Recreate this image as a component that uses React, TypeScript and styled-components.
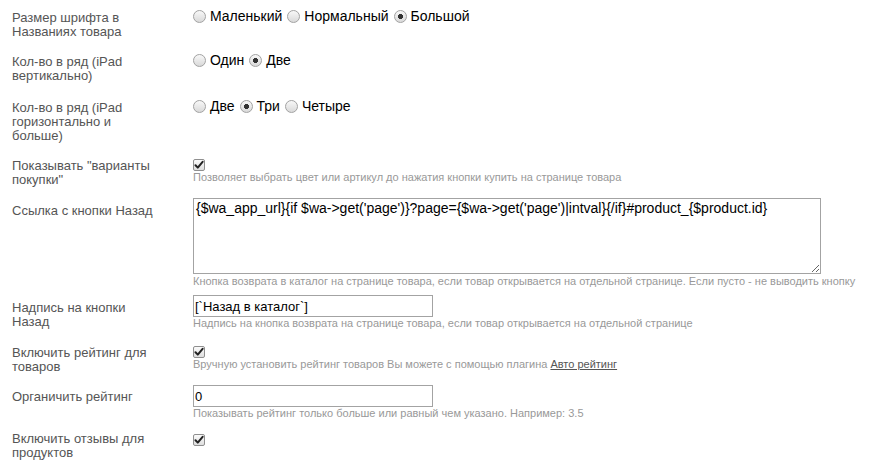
import { createGlobalStyle, styled } from 'styled-components'

const GlobalStyle = createGlobalStyle`
  html, body {
    margin: 0;
    background: #fff;
  }
  body {
    font-family: Arial, "Liberation Sans", sans-serif;
  }
`

type Choice = { text: string; checked?: boolean }

const radioRows: { label: string; name: string; gap: number; choices: Choice[] }[] = [
  {
    label: 'Размер шрифта в Названиях товара',
    name: 'font',
    gap: 16,
    choices: [{ text: 'Маленький' }, { text: 'Нормальный' }, { text: 'Большой', checked: true }],
  },
  {
    label: 'Кол-во в ряд (iPad вертикально)',
    name: 'portrait',
    gap: 18,
    choices: [{ text: 'Один' }, { text: 'Две', checked: true }],
  },
  {
    label: 'Кол-во в ряд (iPad горизонтально и больше)',
    name: 'landscape',
    gap: 16,
    choices: [{ text: 'Две' }, { text: 'Три', checked: true }, { text: 'Четыре' }],
  },
]

export default function App(): JSX.Element {
  return (
    <>
      <GlobalStyle />
      <Form>
        {radioRows.map((row) => (
          <Row key={row.name} $gap={row.gap}>
            <Label>{row.label}</Label>
            <Value>
              <RadioGroup>
                {row.choices.map((c) => (
                  <RadioItem key={c.text}>
                    <Radio type="radio" name={row.name} defaultChecked={c.checked} />
                    {c.text}
                  </RadioItem>
                ))}
              </RadioGroup>
            </Value>
          </Row>
        ))}

        <Row $gap={11}>
          <Label>Показывать "варианты покупки"</Label>
          <Value>
            <CheckBox />
            <Hint>Позволяет выбрать цвет или артикул до нажатия кнопки купить на странице товара</Hint>
          </Value>
        </Row>

        <Row $gap={7}>
          <Label $pad={6}>Ссылка с кнопки Назад</Label>
          <Value>
            <TextArea
              defaultValue="{$wa_app_url}{if $wa->get('page')}?page={$wa->get('page')|intval}{/if}#product_{$product.id}"
            />
            <Hint $top={1}>
              Кнопка возврата в каталог на странице товара, если товар открывается на отдельной странице. Если
              пусто - не выводить кнопку
            </Hint>
          </Value>
        </Row>

        <Row $gap={16}>
          <Label $pad={6}>Надпись на кнопки Назад</Label>
          <Value>
            <TextInput type="text" defaultValue="[`Назад в каталог`]" />
            <Hint>Надпись на кнопка возврата на странице товара, если товар открывается на отдельной странице</Hint>
          </Value>
        </Row>

        <Row $gap={11}>
          <Label>Включить рейтинг для товаров</Label>
          <Value>
            <CheckBox />
            <Hint>
              Вручную установить рейтинг товаров Вы можете с помощью плагина <HintLink href="#">Авто рейтинг</HintLink>
            </Hint>
          </Value>
        </Row>

        <Row $gap={12}>
          <Label $pad={5}>Органичить рейтинг</Label>
          <Value>
            <TextInput type="text" defaultValue="0" />
            <Hint>Показывать рейтинг только больше или равный чем указано. Например: 3.5</Hint>
          </Value>
        </Row>

        <Row $gap={0}>
          <Label>Включить отзывы для продуктов</Label>
          <Value>
            <CheckBox $top={2} />
          </Value>
        </Row>
      </Form>
    </>
  )
}

function CheckBox({ $top = 0 }: { $top?: number }): JSX.Element {
  return (
    <Box $top={$top}>
      <svg width="10" height="10" viewBox="0 0 10 10">
        <path d="M1.5 5.2 L3.8 7.6 L8.6 1.8" fill="none" stroke="#222" strokeWidth="2" strokeLinecap="round" strokeLinejoin="round" />
      </svg>
    </Box>
  )
}

const Form = styled.div`
  padding: 11px 0 0 12px;
`

const Row = styled.div<{ $gap: number }>`
  display: flex;
  align-items: flex-start;
  margin-bottom: ${(p) => p.$gap}px;
`

const Label = styled.div<{ $pad?: number }>`
  flex: none;
  width: 150px;
  margin-right: 31px;
  padding-top: ${(p) => p.$pad ?? 0}px;
  font-size: 13px;
  line-height: 14px;
  color: #555;
`

const Value = styled.div`
  flex: 1;
  min-width: 0;
`

const RadioGroup = styled.div`
  display: flex;
  align-items: center;
  height: 14px;
  margin-top: -2px;
  font-size: 14px;
  line-height: 14px;
  color: #000;
`

const RadioItem = styled.label`
  display: inline-flex;
  align-items: center;
  margin-right: 5px;
`

const Radio = styled.input`
  appearance: none;
  box-sizing: border-box;
  width: 13px;
  height: 13px;
  margin: 0 4px 0 0;
  border-radius: 50%;
  border: 1px solid #a2a2a2;
  background: linear-gradient(#f8f8f8, #d9d9d9);

  &:checked {
    background:
      radial-gradient(circle, #333 0 2.3px, transparent 2.8px),
      linear-gradient(#f8f8f8, #d9d9d9);
  }
`

const Box = styled.span<{ $top: number }>`
  display: flex;
  align-items: center;
  justify-content: center;
  box-sizing: border-box;
  width: 12px;
  height: 12px;
  margin-top: ${(p) => p.$top}px;
  border: 1px solid #8f8f8f;
  border-radius: 2px;
  background: linear-gradient(#fbfbfb, #dedede);
`

const Hint = styled.div<{ $top?: number }>`
  margin-top: ${(p) => p.$top ?? 0}px;
  font-size: 11px;
  line-height: 13px;
  color: #999;
  white-space: nowrap;
`

const HintLink = styled.a`
  color: #555;
  text-decoration: underline;
`

const TextArea = styled.textarea`
  display: block;
  box-sizing: border-box;
  width: 628px;
  height: 76px;
  margin: 0;
  padding: 1px 2px;
  border: 1px solid #a3a3a3;
  font-family: Arial, "Liberation Sans", sans-serif;
  font-size: 14px;
  line-height: 16px;
  color: #000;
`

const TextInput = styled.input`
  display: block;
  box-sizing: border-box;
  width: 240px;
  height: 22px;
  margin: 0;
  padding: 1px;
  border: 1px solid #a3a3a3;
  font-family: Arial, "Liberation Sans", sans-serif;
  font-size: 13px;
  color: #000;
  outline: none;
`
